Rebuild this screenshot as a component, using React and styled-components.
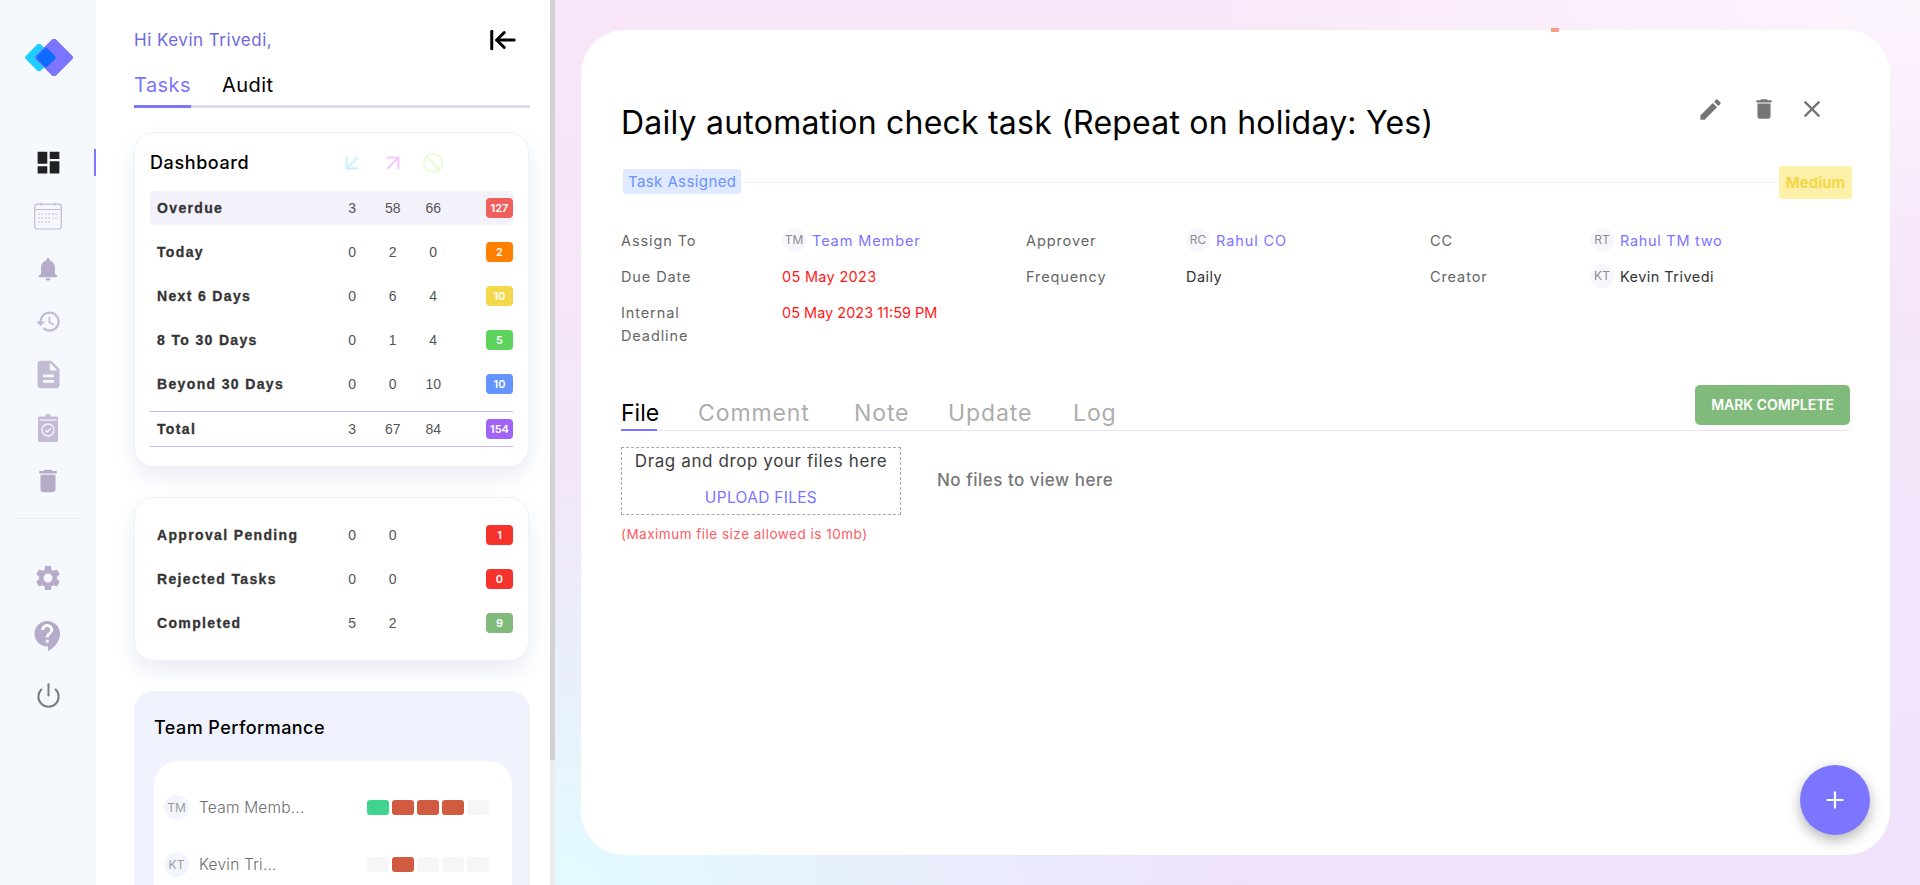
import React from 'react';
import styled, { createGlobalStyle } from 'styled-components';
import { ArrowDownLeft, ArrowUpRight, Ban, ArrowLeftToLine, Power, Plus } from 'lucide-react';

const GlobalStyle = createGlobalStyle`
  html, body { margin: 0; padding: 0; height: 885px; overflow: hidden; }
  body { font-family: Inter, "Noto Sans", sans-serif; background: #fff; }
  * { box-sizing: border-box; }
`;

const Page = styled.div`
  display: flex;
  width: 1920px;
  height: 885px;
  overflow: hidden;
`;

const Rail = styled.nav`
  flex: 0 0 96px;
  display: flex;
  flex-direction: column;
  align-items: center;
  padding-top: 39px;
  background: #f5f9fd;
`;

const Logo = styled.svg`
  width: 48px;
  height: 37px;
  margin: 0 0 60px 2px;
`;

const NavItem = styled.div`
  position: relative;
  width: 100%;
  height: ${p => p.$h || 53}px;
  display: flex;
  align-items: center;
  justify-content: center;
  color: ${p => p.$active ? '#212121' : p.$grey ? '#7d7d7d' : p.$light ? '#c3bbd3' : '#b6abc8'};
  ${p => p.$active && `
    &::after {
      content: '';
      position: absolute;
      right: 0;
      top: 13px;
      width: 2px;
      height: 27px;
      background: #7c75ff;
    }
  `}
`;

const NavDivider = styled.div`
  width: 60px;
  height: 1px;
  background: #ebe6f8;
  margin: 11px 0 30px;
`;

const Panel = styled.aside`
  flex: 0 0 454px;
  padding: 0 20px 0 38px;
  background: #fff;
  overflow: hidden;
`;

const ScrollTrack = styled.div`
  flex: 0 0 5px;
  background: #ececec;
`;

const ScrollThumb = styled.div`
  height: 760px;
  background: #d2d2d2;
`;

const PanelHead = styled.div`
  display: flex;
  align-items: center;
  justify-content: space-between;
  height: 40px;
  margin-top: 20px;
  padding-right: 12px;
  color: #000;
`;

const Greeting = styled.div`
  font-size: 17px;
  font-weight: 400;
  color: #6f69e0;
  letter-spacing: 0.5px;
`;

const SideTabs = styled.div`
  display: flex;
  gap: 31px;
  height: 48px;
  border-bottom: 3px solid #dcdce8;
  width: 396px;
`;

const SideTab = styled.div`
  height: 48px;
  padding-top: 13px;
  font-size: 20px;
  font-weight: 400;
  letter-spacing: 0.45px;
  color: ${p => p.$active ? '#7c75ff' : '#000'};
  ${p => p.$active && 'border-bottom: 3px solid #7c75ff;'}
`;

const Card = styled.section`
  width: 395px;
  margin-top: ${p => p.$first ? 24 : 30}px;
  padding: ${p => p.$first ? '16px 15px 19px' : '20px 15px'};
  background: #fff;
  border: 1px solid #eef2ff;
  border-radius: 20px;
  box-shadow: 0 10px 20px rgba(180, 190, 215, 0.28);
`;

const Grid = styled.div`
  display: grid;
  grid-template-columns: 175px repeat(3, 40.5px) 1fr 27px;
  align-items: center;
  padding-left: 7px;
`;

const CardHead = styled(Grid)`
  height: 28px;
  margin-bottom: 14px;
`;

const CardTitle = styled.div`
  grid-column: 1;
  margin: -2px 0 0 -7px;
  font-size: 18px;
  font-weight: 500;
  letter-spacing: 0.6px;
  color: #000;
  white-space: nowrap;
`;

const HeadIcon = styled.div`
  display: flex;
  justify-content: center;
  color: ${p => p.$color};
`;

const Row = styled(Grid)`
  height: 34px;
  margin-bottom: ${p => p.$last ? 0 : 10}px;
  border-radius: 5px;
  background: ${p => p.$active ? '#f3f2fb' : 'transparent'};
`;

const TotalRow = styled(Row)`
  height: 36px;
  margin: 0;
  border-radius: 0;
  border-top: 1px solid #c9b1fb;
  border-bottom: 1px solid #c9b1fb;
`;

const RowLabel = styled.div`
  font-family: "Liberation Sans", Arial, sans-serif;
  font-size: 14px;
  font-weight: 700;
  letter-spacing: 1.35px;
  color: #343434;
  white-space: nowrap;
  -webkit-text-stroke: 0.3px #343434;
`;

const Num = styled.div`
  text-align: center;
  font-family: "Liberation Sans", Arial, sans-serif;
  font-size: 14px;
  color: #555;
`;

const Badge = styled.div`
  grid-column: 6;
  height: 20px;
  border-radius: 4px;
  background: ${p => p.$color};
  color: #fff;
  font-size: 11px;
  font-weight: 600;
  line-height: 20px;
  text-align: center;
`;

const TeamPanel = styled.section`
  width: 396px;
  margin-top: 30px;
  padding: 26px 18px 0 20px;
  background: #f0f3fe;
  border-radius: 20px 20px 0 0;
`;

const TeamTitle = styled.div`
  font-size: 18px;
  font-weight: 500;
  letter-spacing: 0.45px;
  color: #000;
  height: 26px;
  margin-bottom: 18px;
`;

const TeamInner = styled.div`
  height: 200px;
  padding: 18px 10px;
  background: #fff;
  border-radius: 24px 24px 0 0;
`;

const TeamRow = styled.div`
  display: flex;
  align-items: center;
  height: 57px;
`;

const TeamAvatar = styled.div`
  flex: 0 0 25px;
  height: 25px;
  border-radius: 50%;
  background: #f3f5fd;
  color: #9b9b9b;
  font-size: 12px;
  line-height: 25px;
  text-align: center;
`;

const TeamName = styled.div`
  flex: 0 0 178px;
  padding-left: 10px;
  font-size: 15.5px;
  font-weight: 300;
  color: #6e6e6e;
  letter-spacing: 0.2px;
`;

const Bars = styled.div`
  display: flex;
  gap: 3px;
`;

const Bar = styled.div`
  width: 22px;
  height: 15px;
  border-radius: 3px;
  background: ${p => p.$color};
`;

const Main = styled.main`
  flex: 1;
  padding: 30px 30px 30px 26px;
  background:
    radial-gradient(700px 420px at 0% 100%, #e2fbff 0%, rgba(226, 251, 255, 0) 100%),
    radial-gradient(900px 300px at 100% 0%, rgba(252, 246, 254, 0.9) 0%, rgba(252, 246, 254, 0) 100%),
    linear-gradient(180deg, #f8e5f8 0%, #f3e6fb 50%, #efe2fb 100%);
`;

const TaskCard = styled.article`
  position: relative;
  height: 825px;
  padding: 74px 40px 0;
  background: #fff;
  border-radius: 44px;
`;

const Speck = styled.span`
  position: absolute;
  top: -2px;
  left: 970px;
  width: 8px;
  height: 4px;
  background: #ff9a7e;
`;

const TitleRow = styled.div`
  display: flex;
  justify-content: space-between;
  height: 38px;
`;

const Title = styled.h1`
  margin: 0;
  font-size: 32px;
  font-weight: 400;
  line-height: 38px;
  letter-spacing: 0.22px;
  color: #000;
  white-space: nowrap;
`;

const ActionIcons = styled.div`
  display: flex;
  align-items: center;
  height: 28px;
  margin-top: -9px;
  margin-right: 24px;
  color: #757575;
`;

const ActionIcon = styled.span`
  display: flex;
  margin-left: ${p => p.$ml || 0}px;
`;

const StatusRow = styled.div`
  display: flex;
  align-items: center;
  height: 33px;
  margin-top: 24px;
  padding-left: 2px;
`;

const StatusPill = styled.div`
  height: 25px;
  margin-top: -3px;
  padding: 0 5px;
  border-radius: 3px;
  background: #dfe9ff;
  color: #6b92ff;
  font-size: 15px;
  line-height: 25px;
  letter-spacing: 0.4px;
`;

const StatusLine = styled.div`
  flex: 1;
  height: 1px;
  background: #ececfa;
`;

const PriorityPill = styled.div`
  height: 33px;
  width: 73px;
  margin-right: -2px;
  border-radius: 3px;
  background: #fdf0a8;
  color: #f3d748;
  font-size: 15px;
  font-weight: 700;
  line-height: 33px;
  text-align: center;
`;

const InfoGrid = styled.div`
  display: grid;
  grid-template-columns: 161px 244px 160px 244px 160px 1fr;
  grid-auto-rows: minmax(36px, auto);
  margin-top: 23px;
  font-size: 14.5px;
`;

const InfoLabel = styled.div`
  padding-top: 6.5px;
  color: #666;
  font-weight: 400;
  line-height: 23px;
  letter-spacing: 0.9px;
`;

const InfoValue = styled.div`
  display: flex;
  align-items: center;
  gap: 6px;
  height: 36px;
  color: ${p => p.$color || '#333'};
  letter-spacing: ${p => p.$ls ?? 0.45}px;
`;

const SmallAvatar = styled.span`
  flex: 0 0 24px;
  height: 24px;
  border-radius: 50%;
  background: #f6f6fc;
  color: #8d8d8d;
  font-size: 12px;
  letter-spacing: 0;
  line-height: 24px;
  text-align: center;
`;

const TabsBar = styled.div`
  display: flex;
  align-items: flex-end;
  justify-content: space-between;
  height: 46px;
  margin-top: 38px;
  border-bottom: 1px solid #e8e4fb;
`;

const TabList = styled.div`
  display: flex;
  gap: 41px;
`;

const TabItem = styled.div`
  width: ${p => p.$w}px;
  height: 37px;
  margin-bottom: -1px;
  padding-top: 3px;
  font-size: 23px;
  line-height: 32px;
  white-space: nowrap;
  letter-spacing: ${p => p.$active ? 0 : 0.9}px;
  color: ${p => p.$active ? '#000' : '#adadad'};
  ${p => p.$active && 'border-bottom: 2px solid #7c75ff;'}
`;

const CompleteButton = styled.button`
  width: 155px;
  height: 40px;
  margin: 0 0 5px;
  border: none;
  border-radius: 5px;
  background: #81bb7c;
  color: #fff;
  font-family: inherit;
  font-size: 14px;
  font-weight: 600;
`;

const FileArea = styled.div`
  display: flex;
  gap: 36px;
  margin-top: 16px;
`;

const DropBox = styled.div`
  width: 280px;
  height: 68px;
  padding-top: 3px;
  border: 1px dashed #a8a8a8;
  text-align: center;
  font-size: 17px;
  letter-spacing: 0.6px;
  white-space: nowrap;
  color: #3d3d3d;
`;

const UploadLink = styled.div`
  margin-top: 17px;
  font-size: 15.5px;
  letter-spacing: 0.3px;
  color: #7c75ff;
`;

const SizeNote = styled.div`
  margin-top: 11px;
  font-size: 13.5px;
  color: #ff5a63;
  letter-spacing: 0.5px;
`;

const EmptyText = styled.div`
  margin-top: 23px;
  font-size: 17px;
  font-weight: 500;
  letter-spacing: 0.5px;
  color: #777;
`;

const Fab = styled.button`
  position: absolute;
  right: 20px;
  bottom: 20px;
  width: 70px;
  height: 70px;
  display: flex;
  align-items: center;
  justify-content: center;
  border: none;
  border-radius: 50%;
  background: #7c75ff;
  color: #fff;
  box-shadow: 0 5px 14px rgba(0, 0, 0, 0.3);
`;

const Ico = ({ d, size = 24 }) => (
  <svg width={size} height={size} viewBox="0 0 24 24" fill="currentColor"><path d={d} /></svg>
);

const paths = {
  dash: 'M3 13h8V3H3v10zm0 8h8v-6H3v6zm10 0h8V11h-8v10zm0-18v6h8V3h-8z',
  bell: 'M12 22c1.1 0 2-.9 2-2h-4c0 1.1.89 2 2 2zm6-6v-5c0-3.07-1.64-5.64-4.5-6.32V4c0-.83-.67-1.5-1.5-1.5s-1.5.67-1.5 1.5v.68C7.63 5.36 6 7.92 6 11v5l-2 2v1h16v-1l-2-2z',
  history: 'M13 3c-4.97 0-9 4.03-9 9H1l3.89 3.89.07.14L9 12H6c0-3.87 3.13-7 7-7s7 3.13 7 7-3.13 7-7 7c-1.93 0-3.68-.79-4.94-2.06l-1.42 1.42C8.27 19.99 10.51 21 13 21c4.97 0 9-4.03 9-9s-4.03-9-9-9zm-1 5v5l4.28 2.54.72-1.21-3.5-2.08V8H12z',
  doc: 'M14 2H6c-1.1 0-1.99.9-1.99 2L4 20c0 1.1.89 2 1.99 2H18c1.1 0 2-.9 2-2V8l-6-6zm2 16H8v-2h8v2zm0-4H8v-2h8v2zm-3-5V3.5L18.5 9H13z',
  trash: 'M6 19c0 1.1.9 2 2 2h8c1.1 0 2-.9 2-2V7H6v12zM19 4h-3.5l-1-1h-5l-1 1H5v2h14V4z',
  gear: 'M19.14 12.94c.04-.3.06-.61.06-.94 0-.32-.02-.64-.07-.94l2.03-1.58c.18-.14.23-.41.12-.61l-1.92-3.32c-.12-.22-.37-.29-.59-.22l-2.39.96c-.5-.38-1.03-.7-1.62-.94l-.36-2.54c-.04-.24-.24-.41-.48-.41h-3.84c-.24 0-.43.17-.47.41l-.36 2.54c-.59.24-1.13.57-1.62.94l-2.39-.96c-.22-.08-.47 0-.59.22L2.74 8.87c-.12.21-.08.47.12.61l2.03 1.58c-.05.3-.09.63-.09.94s.02.64.07.94l-2.03 1.58c-.18.14-.23.41-.12.61l1.92 3.32c.12.22.37.29.59.22l2.39-.96c.5.38 1.03.7 1.62.94l.36 2.54c.05.24.24.41.48.41h3.84c.24 0 .44-.17.47-.41l.36-2.54c.59-.24 1.13-.56 1.62-.94l2.39.96c.22.08.47 0 .59-.22l1.92-3.32c.12-.22.07-.47-.12-.61l-2.01-1.58zM12 15.6c-1.98 0-3.6-1.62-3.6-3.6s1.62-3.6 3.6-3.6 3.6 1.62 3.6 3.6-1.62 3.6-3.6 3.6z',
  help: 'M11.5 2C6.81 2 3 5.81 3 10.5 3 15.19 6.81 19 11.5 19h.5v3c4.86-2.34 8-7 8-11.5C20 5.81 16.19 2 11.5 2zm1 14.5h-2v-2h2v2zm0-3.5h-2c0-3.25 3-3 3-5 0-1.1-.9-2-2-2s-2 .9-2 2h-2c0-2.21 1.79-4 4-4s4 1.79 4 4c0 2.5-3 2.75-3 5z',
  edit: 'M3 17.25V21h3.75L17.81 9.94l-3.75-3.75L3 17.25zM20.71 7.04c.39-.39.39-1.02 0-1.41l-2.34-2.34c-.39-.39-1.02-.39-1.41 0l-1.83 1.83 3.75 3.75 1.83-1.83z',
  close: 'M19 6.41L17.59 5 12 10.59 6.41 5 5 6.41 10.59 12 5 17.59 6.41 19 12 13.41 17.59 19 19 17.59 13.41 12 19 6.41z',
};

const CalendarIcon = () => (
  <svg width="28" height="28" viewBox="0 0 28 28" fill="none" stroke="currentColor">
    <rect x="0.7" y="2.2" width="26.6" height="24.8" rx="2.5" strokeWidth="1.2" />
    <path d="M1 7.5h26M7 0.5v3.5M21 0.5v3.5" strokeWidth="1" />
    <path d="M4 12h5M11 12h5M18 12h5M4 16h5M11 16h5M18 16h5M4 20h5M11 20h5" strokeWidth="1" strokeDasharray="2 1" />
  </svg>
);

const ClipboardIcon = () => (
  <svg width="20" height="28" viewBox="0 0 20 28">
    <path fill="currentColor" d="M7 2.5C7 1 8.5 0 10 0s3 1 3 2.500h5.500c.8 0 1.500.7 1.500 1.500v22.500c0 .8-.7 1.500-1.500 1.500h-17C.7 28 0 27.300 0 26.500V4c0-.8.7-1.500 1.500-1.500H7z" />
    <rect x="1.500" y="5.500" width="17" height="1.200" fill="#f5f9fd" />
    <circle cx="10" cy="16" r="6" fill="none" stroke="#f5f9fd" strokeWidth="1.300" />
    <path d="M7.300 16l2 2 3.600-3.800" fill="none" stroke="#f5f9fd" strokeWidth="1.300" />
  </svg>
);

const dashboardRows = [
  { label: 'Overdue', nums: [3, 58, 66], total: 127, color: '#f15f5c', active: true },
  { label: 'Today', nums: [0, 2, 0], total: 2, color: '#ff8000' },
  { label: 'Next 6 Days', nums: [0, 6, 4], total: 10, color: '#f4d84c' },
  { label: '8 To 30 Days', nums: [0, 1, 4], total: 5, color: '#5cd35c' },
  { label: 'Beyond 30 Days', nums: [0, 0, 10], total: 10, color: '#6394ff' },
];

const statusRows = [
  { label: 'Approval Pending', nums: [0, 0], total: 1, color: '#f5332c' },
  { label: 'Rejected Tasks', nums: [0, 0], total: 0, color: '#f5332c' },
  { label: 'Completed', nums: [5, 2], total: 9, color: '#81bb7c' },
];

const G = '#40d390';
const R = '#d15b40';
const E = '#f6f6f7';

const team = [
  { initials: 'TM', name: 'Team Memb...', bars: [G, R, R, R, E] },
  { initials: 'KT', name: 'Kevin Tri...', bars: [E, R, E, E, E] },
];

const tabs = [
  { name: 'File', w: 36 },
  { name: 'Comment', w: 115 },
  { name: 'Note', w: 53 },
  { name: 'Update', w: 84 },
  { name: 'Log', w: 38 },
];

function App() {
  return (
    <Page>
      <GlobalStyle />
      <Rail>
        <Logo viewBox="0 0 48 37">
          <rect x="3.500" y="8" width="21" height="21" rx="3" transform="rotate(45 14 18.500)" fill="#1dcdfe" />
          <rect x="14.750" y="4.250" width="28.500" height="28.500" rx="3" transform="rotate(45 29 18.500)" fill="#7c75ff" />
          <rect x="13.500" y="11" width="15" height="15" rx="2.500" transform="rotate(45 21 18.500)" fill="#0b6cff" />
        </Logo>
        <NavItem $active><Ico d={paths.dash} size={29} /></NavItem>
        <NavItem $light><CalendarIcon /></NavItem>
        <NavItem><Ico d={paths.bell} size={28} /></NavItem>
        <NavItem $light><Ico d={paths.history} size={27} /></NavItem>
        <NavItem $light><Ico d={paths.doc} size={33} /></NavItem>
        <NavItem $light><ClipboardIcon /></NavItem>
        <NavItem><Ico d={paths.trash} size={30} /></NavItem>
        <NavDivider />
        <NavItem $h={58}><Ico d={paths.gear} size={30} /></NavItem>
        <NavItem $h={58}><Ico d={paths.help} size={36} /></NavItem>
        <NavItem $h={60} $grey><Power size={27} strokeWidth={1.8} /></NavItem>
      </Rail>

      <Panel>
        <PanelHead>
          <Greeting>Hi Kevin Trivedi,</Greeting>
          <ArrowLeftToLine size={30} strokeWidth={2.4} />
        </PanelHead>
        <SideTabs>
          <SideTab $active>Tasks</SideTab>
          <SideTab>Audit</SideTab>
        </SideTabs>

        <Card $first>
          <CardHead>
            <CardTitle>Dashboard</CardTitle>
            <HeadIcon $color="#c8f4ff"><ArrowDownLeft size={26} /></HeadIcon>
            <HeadIcon $color="#f6ccff"><ArrowUpRight size={26} /></HeadIcon>
            <HeadIcon $color="#e6fdd0"><Ban size={22} /></HeadIcon>
          </CardHead>
          {dashboardRows.map(r => (
            <Row key={r.label} $active={r.active}>
              <RowLabel>{r.label}</RowLabel>
              {r.nums.map((n, i) => <Num key={i}>{n}</Num>)}
              <Badge $color={r.color}>{r.total}</Badge>
            </Row>
          ))}
          <TotalRow>
            <RowLabel>Total</RowLabel>
            <Num>3</Num>
            <Num>67</Num>
            <Num>84</Num>
            <Badge $color="#a162f7">154</Badge>
          </TotalRow>
        </Card>

        <Card>
          {statusRows.map((r, idx) => (
            <Row key={r.label} $last={idx === statusRows.length - 1}>
              <RowLabel>{r.label}</RowLabel>
              {r.nums.map((n, i) => <Num key={i}>{n}</Num>)}
              <Badge $color={r.color}>{r.total}</Badge>
            </Row>
          ))}
        </Card>

        <TeamPanel>
          <TeamTitle>Team Performance</TeamTitle>
          <TeamInner>
            {team.map(m => (
              <TeamRow key={m.initials}>
                <TeamAvatar>{m.initials}</TeamAvatar>
                <TeamName>{m.name}</TeamName>
                <Bars>
                  {m.bars.map((c, i) => <Bar key={i} $color={c} />)}
                </Bars>
              </TeamRow>
            ))}
          </TeamInner>
        </TeamPanel>
      </Panel>
      <ScrollTrack><ScrollThumb /></ScrollTrack>

      <Main>
        <TaskCard>
          <Speck />
          <TitleRow>
            <Title>Daily automation check task (Repeat on holiday: Yes)</Title>
            <ActionIcons>
              <ActionIcon><Ico d={paths.edit} size={27} /></ActionIcon>
              <ActionIcon $ml={27}><Ico d={paths.trash} size={26} /></ActionIcon>
              <ActionIcon $ml={21}><Ico d={paths.close} size={28} /></ActionIcon>
            </ActionIcons>
          </TitleRow>
          <StatusRow>
            <StatusPill>Task Assigned</StatusPill>
            <StatusLine />
            <PriorityPill>Medium</PriorityPill>
          </StatusRow>

          <InfoGrid>
            <InfoLabel>Assign To</InfoLabel>
            <InfoValue $color="#7c75ff" $ls={0.9}><SmallAvatar>TM</SmallAvatar>Team Member</InfoValue>
            <InfoLabel>Approver</InfoLabel>
            <InfoValue $color="#7c75ff" $ls={0.9}><SmallAvatar>RC</SmallAvatar>Rahul CO</InfoValue>
            <InfoLabel>CC</InfoLabel>
            <InfoValue $color="#7c75ff" $ls={0.7}><SmallAvatar>RT</SmallAvatar>Rahul TM two</InfoValue>

            <InfoLabel>Due Date</InfoLabel>
            <InfoValue $color="#ff1a1a" $ls={0.3}>05 May 2023</InfoValue>
            <InfoLabel>Frequency</InfoLabel>
            <InfoValue>Daily</InfoValue>
            <InfoLabel>Creator</InfoLabel>
            <InfoValue><SmallAvatar>KT</SmallAvatar>Kevin Trivedi</InfoValue>

            <InfoLabel>Internal<br />Deadline</InfoLabel>
            <InfoValue $color="#ff1a1a" $ls={0}>05 May 2023 11:59 PM</InfoValue>
          </InfoGrid>

          <TabsBar>
            <TabList>
              {tabs.map((t, i) => <TabItem key={t.name} $w={t.w} $active={i === 0}>{t.name}</TabItem>)}
            </TabList>
            <CompleteButton>MARK COMPLETE</CompleteButton>
          </TabsBar>

          <FileArea>
            <div>
              <DropBox>
                Drag and drop your files here
                <UploadLink>UPLOAD FILES</UploadLink>
              </DropBox>
              <SizeNote>(Maximum file size allowed is 10mb)</SizeNote>
            </div>
            <EmptyText>No files to view here</EmptyText>
          </FileArea>

          <Fab><Plus size={26} strokeWidth={2} /></Fab>
        </TaskCard>
      </Main>
    </Page>
  );
}

export default App;
